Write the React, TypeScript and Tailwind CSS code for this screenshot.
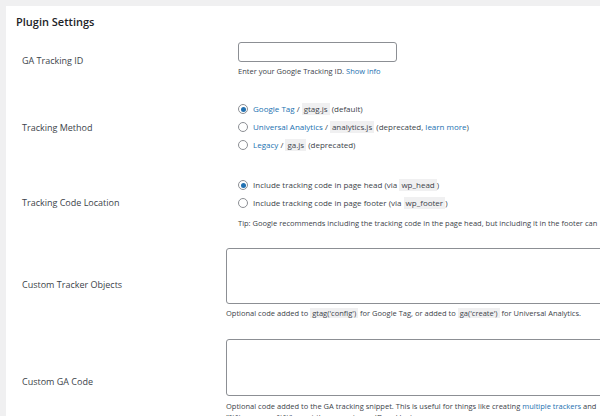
export default function App() {
  const F = { fontFamily: '"Open Sans", "Noto Sans", sans-serif' };
  const code = "bg-[#f0f0f1] px-[2px]";
  const link = "text-[#2271b1]";
  const Radio = ({ on }: { on?: boolean }) => (
    <span className={`inline-flex items-center justify-center w-[10px] h-[10px] rounded-full border border-[#8c8f94] mr-[5px] bg-white shrink-0`}>
      {on && <span className="w-[5px] h-[5px] rounded-full bg-[#2271b1]" />}
    </span>
  );
  return (
    <div style={F} className="w-[600px] h-[416px] bg-[#f0f0f1] overflow-hidden pl-[6px] pt-[6px]">
      <div className="bg-white h-[500px] w-[620px] text-[#3c434a] text-[8px] whitespace-nowrap">
        <div className="pl-[10px] pt-[8px] h-[30px] text-[11px] font-semibold text-[#1d2327]">Plugin Settings</div>
        {/* GA Tracking ID */}
        <div className="flex h-[50px]">
          <div className="w-[232px] pl-[16px] pt-[18px] text-[9px]">GA Tracking ID</div>
          <div className="pt-[6px]">
            <div className="w-[159px] h-[20px] border border-[#8c8f94] rounded-[3px]" />
            <div className="mt-[4px] text-[7.5px]">Enter your Google Tracking ID. <span className={link}>Show info</span></div>
          </div>
        </div>
        {/* Tracking Method */}
        <div className="flex h-[76px]">
          <div className="w-[232px] pl-[16px] pt-[35px] text-[9px]">Tracking Method</div>
          <div className="pt-[17px] flex flex-col gap-[6px]">
            <div className="flex items-center h-[12px]"><Radio on /><span className={link}>Google Tag</span>&nbsp;/&nbsp;<span className={code}>gtag.js</span>&nbsp;(default)</div>
            <div className="flex items-center h-[12px]"><Radio /><span className={link}>Universal Analytics</span>&nbsp;/&nbsp;<span className={code}>analytics.js</span>&nbsp;(deprecated,&nbsp;<span className={link}>learn more</span>)</div>
            <div className="flex items-center h-[12px]"><Radio /><span className={link}>Legacy</span>&nbsp;/&nbsp;<span className={code}>ga.js</span>&nbsp;(deprecated)</div>
          </div>
        </div>
        {/* Location */}
        <div className="flex h-[84px]">
          <div className="w-[232px] pl-[16px] pt-[34px] text-[9px]">Tracking Code Location</div>
          <div className="pt-[17px] flex flex-col gap-[6px]">
            <div className="flex items-center h-[12px]"><Radio on />Include tracking code in page head (via&nbsp;<span className={code}>wp_head</span>)</div>
            <div className="flex items-center h-[12px]"><Radio />Include tracking code in page footer (via&nbsp;<span className={code}>wp_footer</span>)</div>
            <div className="mt-[3px] text-[7.5px]">Tip: Google recommends including the tracking code in the page head, but including it in the footer can</div>
          </div>
        </div>
        {/* Custom Tracker Objects */}
        <div className="flex h-[91px]">
          <div className="w-[232px] pl-[16px] pt-[32px] text-[9px]">Custom Tracker Objects</div>
          <div className="pt-[2px]">
            <div className="w-[400px] h-[56px] border border-[#8c8f94] rounded-[3px]" />
            <div className="mt-[4px] text-[7.5px]">Optional code added to <span className={code}>gtag('config')</span> for Google Tag, or added to <span className={code}>ga('create')</span> for Universal Analytics.</div>
          </div>
        </div>
        {/* Custom GA Code */}
        <div className="flex">
          <div className="w-[232px] pl-[16px] pt-[38px] text-[9px]">Custom GA Code</div>
          <div className="pt-[2px]">
            <div className="w-[400px] h-[57px] border border-[#8c8f94] rounded-[3px]" />
            <div className="mt-[5px] text-[7.5px]">Optional code added to the GA tracking snippet. This is useful for things like creating <span className={link}>multiple trackers</span> and</div>
            <div className="text-[7.5px]">"%%username%%" as set the current user ID and login name</div>
          </div>
        </div>
      </div>
    </div>
  );
}
